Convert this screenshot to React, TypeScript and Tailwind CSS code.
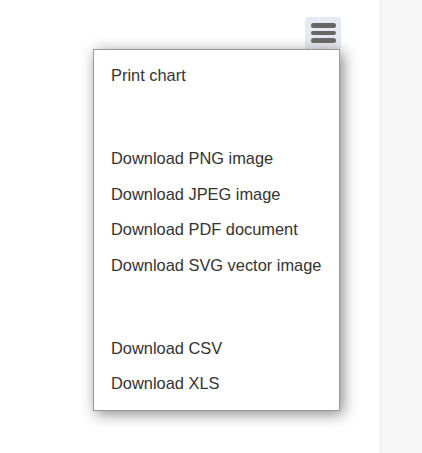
const items: (string | null)[] = [
  'Print chart',
  null,
  'Download PNG image',
  'Download JPEG image',
  'Download PDF document',
  'Download SVG vector image',
  null,
  'Download CSV',
  'Download XLS',
];

export default function App() {
  return (
    <div className="flex h-[453px] w-[422px] bg-white font-['Liberation_Sans',Arial,sans-serif]">
      <div className="relative flex-1">
        {/* context button */}
        <div className="absolute left-[305px] top-[17px] flex h-[33px] w-[36px] flex-col items-center gap-[3px] rounded-[3px] bg-[#e6e9f2] pt-[6px]">
          <span className="block h-[4.5px] w-[25px] rounded-full bg-[#666666]" />
          <span className="block h-[4.5px] w-[25px] rounded-full bg-[#666666]" />
          <span className="block h-[4.5px] w-[25px] rounded-full bg-[#666666]" />
        </div>

        {/* export menu */}
        <div className="absolute left-[93px] top-[49px] w-[247px] border border-[#999999] bg-white pt-[8px] pb-[8px] shadow-[3px_3px_14px_#888888]">
          {items.map((label, i) =>
            label ? (
              <div key={i} className="flex h-[35.5px] items-center px-[17px] text-[16.4px] text-[#333333]">
                {label}
              </div>
            ) : (
              <div key={i} className="h-[47.5px]" />
            )
          )}
        </div>
      </div>
      <div className="w-[42px] border-l border-[#ececec] bg-[#f7f7f7]" />
    </div>
  );
}
